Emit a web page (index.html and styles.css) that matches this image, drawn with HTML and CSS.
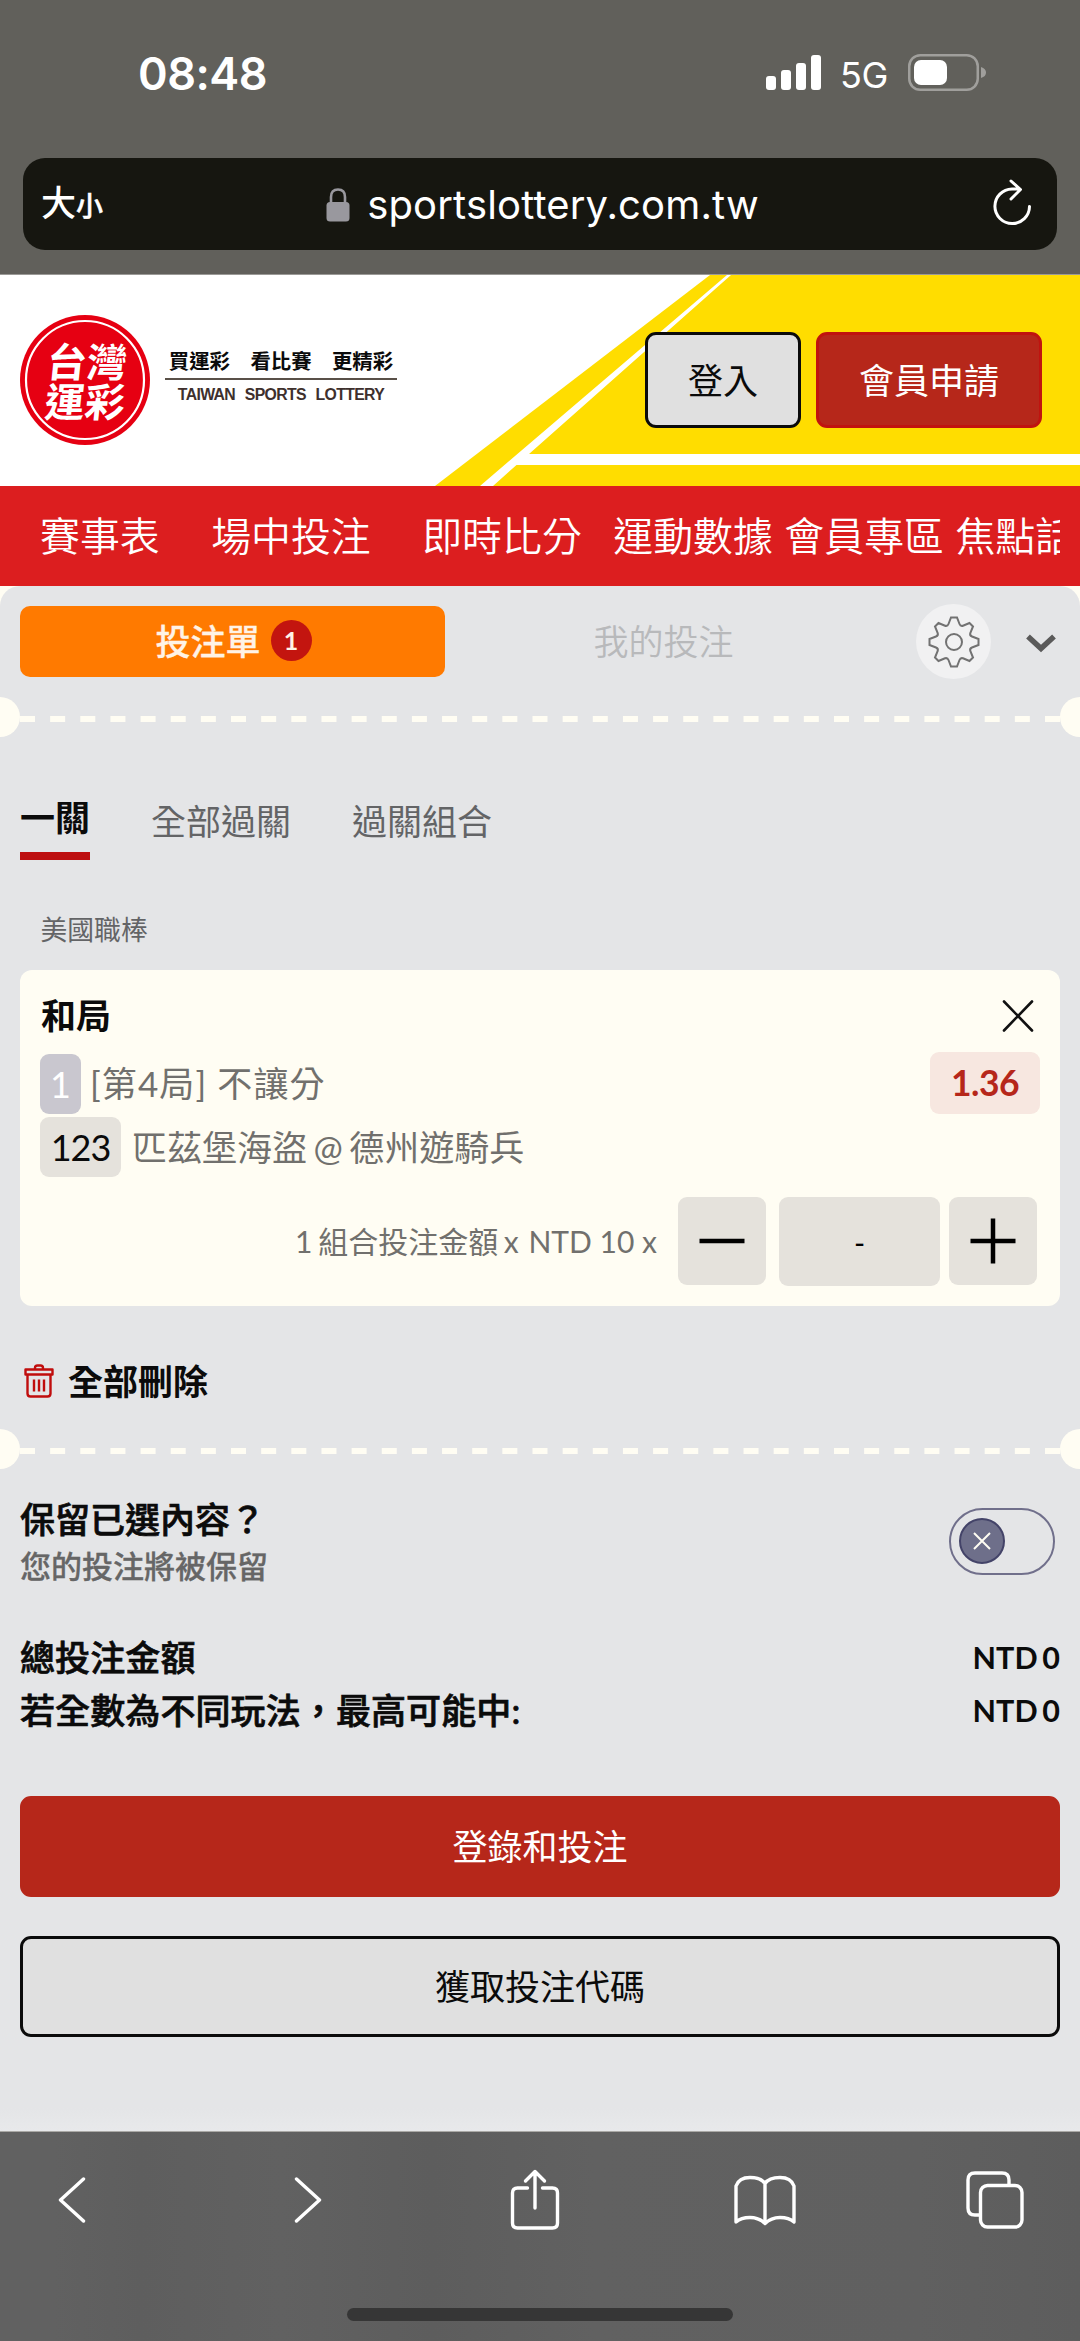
FILE: index.html
```html
<!DOCTYPE html>
<html lang="zh-Hant">
<head>
<meta charset="utf-8">
<title>台灣運彩</title>
<link rel="stylesheet" href="styles.css">
</head>
<body>
<div class="browser-top">
  <div class="status">
    <span class="clock">08:48</span>
    <div class="status-right">
      <svg class="signal" width="55" height="36" viewBox="0 0 55 36" fill="#fff"><rect x="0" y="21" width="10" height="14" rx="3"/><rect x="15" y="15" width="10" height="20" rx="3"/><rect x="30" y="8" width="10" height="27" rx="3"/><rect x="45" y="0" width="10" height="35" rx="3"/></svg>
      <span class="net">5G</span>
      <svg class="battery" width="80" height="38" viewBox="0 0 80 38"><rect x="1.25" y="1.25" width="68.5" height="34.5" rx="11" fill="none" stroke="#a09f9c" stroke-width="2.5"/><rect x="6" y="6" width="33" height="25" rx="7" fill="#fff"/><path d="M73 13q5 1.500 5 5.500t-5 5.500z" fill="#a09f9c"/></svg>
    </div>
  </div>
  <div class="urlbar">
    <span class="textsize"><b class="ts-big">大</b><b class="ts-small">小</b></span>
    <span class="url">
      <svg width="24" height="34" viewBox="0 0 24 34"><rect x="0.500" y="14" width="23" height="19.500" rx="3.500" fill="#99989e"/><path d="M5 15V9q0-7.500 7-7.500T19 9v6" fill="none" stroke="#99989e" stroke-width="2.600"/></svg>
      <span>sportslottery.com.tw</span>
    </span>
    <svg class="reload" width="42" height="48" viewBox="0 0 42 48" fill="none" stroke="#fff" stroke-width="3" stroke-linecap="round" stroke-linejoin="round"><path d="M38.500 27.500A17.300 17.300 0 1 1 21 10h8M20 2l9.500 8.500L20 20"/></svg>
  </div>
</div>
<header class="site-header">
  <svg class="header-art" width="1080" height="211" viewBox="0 0 1080 211"><path d="M710 0H1080V211H435z" fill="#fd0"/><path d="M727 0h4L529 179H1080v11H516.500L493 211H480z" fill="#fff"/></svg>
  <svg class="logo" width="130" height="130" viewBox="0 0 130 130"><circle cx="65" cy="65" r="65" fill="#e60012"/><circle cx="65" cy="65" r="59" fill="none" stroke="#fff" stroke-width="2.200"/><g class="logo-text" fill="#fff"><text transform="translate(25.500 62) skewX(-6)">台灣</text><text transform="translate(23.500 101.500) skewX(-6)">運彩</text></g></svg>
  <div class="slogan"><div class="slogan-zh">買運彩　看比賽　更精彩</div><div class="slogan-en">TAIWAN SPORTS LOTTERY</div></div>
  <div class="header-actions"><button class="btn btn-plain login">登入</button><button class="btn btn-red signup">會員申請</button></div>
</header>
<nav class="nav"><div class="nav-list"><a class="wide">賽事表</a><a class="wide">場中投注</a><a class="mid">即時比分</a><a>運動數據</a><a>會員專區</a><a>焦點話題</a></div></nav>
<main class="slip-bg">
 <div class="slip">
  <div class="slip-tabs">
    <div class="tab-active"><span>投注單</span><span class="count">1</span></div>
    <div class="tab-mine">我的投注</div>
    <div class="gear"><svg width="52" height="52" viewBox="-26 -26 52 52" fill="none" stroke="#727272" stroke-width="2"><path d="M-3-24.500H3L5.500-18Q6.500-15.500 9-16.300L15.500-19 19-15.500 16.300-9Q15.500-6.500 18-5.500L24.500-3V3L18 5.500Q15.500 6.500 16.300 9L19 15.500 15.500 19 9 16.300Q6.500 15.500 5.500 18L3 24.500H-3L-5.500 18Q-6.500 15.500-9 16.300L-15.500 19-19 15.500-16.300 9Q-15.500 6.500-18 5.500L-24.500 3V-3L-18-5.500Q-15.500-6.500-16.300-9L-19-15.500-15.500-19-9-16.300Q-6.500-15.500-5.500-18z"/><circle r="8"/></svg></div>
    <svg class="chev" width="32" height="20" viewBox="0 0 32 20"><path d="M3 3.500 16 15.500 29 3.500" fill="none" stroke="#5a5a5a" stroke-width="5.500"/></svg>
  </div>
  <div class="perf"><i></i><svg width="1040" height="6"><line x1="0" y1="3" x2="1040" y2="3" stroke="#fffdf3" stroke-width="6" stroke-dasharray="15 15.147"/></svg><i></i></div>
  <div class="modes"><div class="mode on">一關</div><div class="mode">全部過關</div><div class="mode">過關組合</div></div>
  <div class="league">美國職棒</div>
  <section class="card">
    <div class="row head"><span>和局</span><svg width="32" height="32" viewBox="0 0 32 32"><path d="M2 1.500 30 30.500M30 1.500 2 30.500" stroke="#111" stroke-width="2.600" stroke-linecap="round"/></svg></div>
    <div class="row market"><span class="chip chip-a">1</span><span class="txt">[第4局] 不讓分</span><span class="odds">1.36</span></div>
    <div class="row match"><span class="chip chip-b">123</span><span class="txt">匹茲堡海盜 @ 德州遊騎兵</span></div>
    <div class="row stake"><span class="stake-label">1 組合投注金額 x <span class="unit">NTD 10 x</span></span>
      <span class="sq"><svg width="46" height="46"><path d="M.5 23H45.500" stroke="#000" stroke-width="4.500"/></svg></span>
      <span class="field">-</span>
      <span class="sq"><svg width="46" height="46"><path d="M.5 23H45.500M23 .5V45.500" stroke="#000" stroke-width="4.500"/></svg></span></div>
  </section>
  <div class="clear"><svg width="30" height="34" viewBox="0 0 30 34" fill="none" stroke="#c00d0d" stroke-width="2.400" stroke-linejoin="round"><path d="M1.500 5.500H28.500V10.500H1.500zM11 5.500V4Q11 1.500 13.500 1.500h3Q19 1.500 19 4V5.500M3.500 10.500V29.500Q3.500 32.500 6.500 32.500h17Q26.500 32.500 26.500 29.500V10.500M10 15.500v12M15 15.500v12M20 15.500v12"/></svg><span>全部刪除</span></div>
  <div class="perf"><i></i><svg width="1040" height="6"><line x1="0" y1="3" x2="1040" y2="3" stroke="#fffdf3" stroke-width="6" stroke-dasharray="15 15.147"/></svg><i></i></div>
  <div class="keep"><div><div class="keep-title">保留已選內容？</div><div class="keep-sub">您的投注將被保留</div></div>
    <div class="toggle"><span class="knob"><svg width="18" height="18"><path d="M1 1 17 17M17 1 1 17" stroke="#fffdf3" stroke-width="2"/></svg></span></div></div>
  <div class="total"><span>總投注金額</span><span class="sum">NTD 0</span></div>
  <div class="total"><span>若全數為不同玩法，最高可能中:</span><span class="sum">NTD 0</span></div>
  <button class="btn btn-red big first">登錄和投注</button>
  <button class="btn btn-plain big">獲取投注代碼</button>
 </div>
</main>
<footer class="toolbar">
  <div class="tools">
    <svg class="back" width="28" height="46" viewBox="0 0 28 46"><path d="M25.500 2 2.500 23 25.500 44"/></svg>
    <svg class="forward" width="28" height="46" viewBox="0 0 28 46"><path d="M2.500 2 25.500 23 2.500 44"/></svg>
    <svg class="share" width="50" height="62" viewBox="0 0 50 62"><path d="M17.500 19H7.500Q2.500 19 2.500 24V54Q2.500 59 7.500 59H42.500Q47.500 59 47.500 54V24Q47.500 19 42.500 19H32.500M25 39V3M15.500 12 25 2.500 34.500 12"/></svg>
    <svg class="books" width="62" height="52" viewBox="0 0 62 52"><path d="M31 9.500Q27 3.500 16 3.500T2 12V48Q7 43.500 16 43.500T31 49.500Q37 43.500 46 43.500T60 48V12Q57 3.500 46 3.500T31 9.500V49"/></svg>
    <svg width="58" height="58" viewBox="0 0 58 58"><path d="M14 44H9Q2 44 2 37V9Q2 2 9 2H36Q43 2 43 9V14"/><rect x="14.500" y="14.500" width="41.500" height="41.500" rx="7"/></svg>
  </div>
  <div class="home"></div>
</footer>
</body>
</html>
```
FILE: styles.css
```css
*{box-sizing:border-box}
body{margin:0;width:1080px;height:2341px;overflow:hidden;font-family:Lato,"Noto Sans CJK TC",sans-serif;font-size:35px;line-height:36px;color:#0b0b0b;display:flex;flex-direction:column;font-weight:400}
svg{display:block;flex:none}
.browser-top{height:275px;background:#61605b;border-bottom:1px solid #9b9a97;padding:0 23px;font-family:Inter,"Noto Sans CJK TC",sans-serif;color:#fff;flex:none}
.status{height:158px;display:flex;justify-content:space-between;padding:54px 69px 0 115px}
.clock{font-size:45px;font-weight:600;line-height:40px;letter-spacing:-.5px}
.status-right{display:flex;align-items:flex-start;color:#fff}
.signal{margin-top:1px}
.net{font-size:36px;line-height:42px;width:47px;margin:0 20px;letter-spacing:-.5px;position:relative;left:-1px}
.urlbar{height:92px;border-radius:22px;background:#161610;display:flex;align-items:center;justify-content:space-between;padding:0 24px 0 18px}
.textsize{width:103px;display:flex;align-items:baseline;line-height:50px;padding-top:2px}
.ts-big{font-size:35px;font-weight:500}
.ts-small{font-size:27px;font-weight:500;-webkit-text-stroke:.5px}
.url{display:flex;align-items:center;gap:17px;font-size:40px;line-height:50px;padding-top:1px;letter-spacing:.15px}
.reload{margin-left:50px;margin-top:-2px}
.site-header{height:211px;background:#fff;position:relative;display:flex;align-items:flex-start;flex:none}
.header-art{position:absolute;left:0;top:0}
.logo{margin:40px 15px 0 20px;position:relative}
.logo-text{font:700 40px "Noto Sans CJK TC",sans-serif}
.slogan{position:relative;width:232px;margin-top:73px;text-align:center}
.slogan-zh{font:700 20.4px/25px "Noto Sans CJK TC",sans-serif;height:32px;border-bottom:2px solid #595048;white-space:nowrap}
.slogan-en{font:700 15.8px/20px "Liberation Sans",sans-serif;color:#3e302d;margin-top:5px;word-spacing:6px;white-space:nowrap;letter-spacing:-.65px}
.header-actions{position:relative;margin:57px 38px 0 auto;display:flex;gap:15px}
.btn{font:inherit;border-radius:11px;border:3px solid;padding:0 0 1px;text-align:center}
.btn-plain{background:#e0e0e0;border-color:#0b0b0b;color:#0b0b0b}
.btn-red{background:#b6271a;border-color:#c0130f;color:#fff}
.login{width:156px;height:96px}
.signup{width:226px;height:96px}
.nav{height:100px;background:#dc1e1f;padding:0 20px;flex:none}
.nav-list{overflow:hidden;height:100px;display:flex;white-space:nowrap;padding-left:20px;color:#fff;font-size:39.9px;line-height:99px;font-weight:350}
.nav a{margin-right:11.500px;flex:none}
.nav .wide{margin-right:51.500px}
.nav .mid{margin-right:31.500px}
.slip-bg{background:#fffdf3;height:1545px;flex:none}
.slip{height:1545px;border-radius:20px 20px 0 0;background:linear-gradient(#e4e5e7 1522px,#e8e9eb 1545px);display:flex;flex-direction:column;align-items:stretch}
.slip-tabs{display:flex;align-items:center;height:75px;margin-top:18px;padding:0 23px 0 20px;flex:none}
.tab-active{width:425px;height:71px;border-radius:10px;background:#ff7a00;color:#fff3e6;display:flex;align-items:center;justify-content:center;gap:10px;font-weight:500;padding:0 0 2px 2px}
.tab-active span:first-child{-webkit-text-stroke:.3px}
.count{width:41px;height:41px;border-radius:50%;background:#c3150f;font-size:25px;font-weight:700;line-height:40px;text-align:center}
.tab-mine{width:437px;text-align:center;color:#b8b9bb;font-weight:350;padding-bottom:2px}
.gear{width:75px;height:75px;border-radius:50%;background:#f1f1f2;display:flex;align-items:center;justify-content:center;margin-left:34px}
.chev{margin-left:34px;margin-top:2px}
.perf{height:40px;display:flex;align-items:center;overflow:hidden;flex:none;margin-top:18px}
.perf svg{margin-top:4px}
.perf i{width:20px;height:40px;background:#fffdf3;border-radius:0 20px 20px 0}
.perf i:last-child{border-radius:20px 0 0 20px}
.modes{display:flex;gap:61px;margin:63px 20px 0;height:60px;flex:none}
.mode{color:#636466;line-height:42px;font-size:35px}
.mode.on{font-weight:700;color:#0b0b0b;border-bottom:8px solid #bd0f10;line-height:34px}
.league{font-size:26.8px;line-height:31px;height:30px;color:#636466;margin:55px 0 0 40.500px}
.card{margin:25px 20px 0;height:336px;border-radius:12px;background:#fffdf3;padding:29px 20px 0;flex:none}
.row{display:flex;align-items:center}
.head{height:34px;font-weight:700;justify-content:space-between;padding:0 6px 0 1px}
.head span{padding-bottom:2px}
.market{height:63px;margin-top:18px;color:#71706d}
.market .txt{letter-spacing:1.1px}
.chip{height:60px;border-radius:9px;line-height:60px;text-align:center;font-size:36px}
.chip-a{width:41px;background:#c9c7cf;color:#fff;margin-right:9px;margin-top:3px}
.chip-b{width:81px;background:#e5e2dc;color:#0b0b0b;margin-right:11px;letter-spacing:-1px}
.odds{margin-left:auto;width:110px;height:62px;border-radius:9px;background:#f7e7e0;color:#b6271a;font-weight:700;font-size:35.500px;line-height:61px;text-align:center;letter-spacing:-.5px}
.match{height:60px;margin-top:3px;color:#71706d}
.match .txt{word-spacing:-2.500px}
.stake{margin-top:20px;height:89px;justify-content:flex-end;padding-right:3px;font-size:30px;color:#71706d;align-items:flex-start;line-height:89px}
.stake-label{margin-right:21px;word-spacing:-2px}
.unit{word-spacing:0;margin-left:4px}
.sq{width:88px;height:88px;border-radius:9px;background:#e5e2dc;display:flex;align-items:center;justify-content:center}
.field{width:161px;height:89px;border-radius:9px;background:#e5e2dc;color:#000;margin:0 9px 0 13px;text-align:center;line-height:91px}
.clear{display:flex;align-items:center;height:36px;margin:57px 0 0 24px;gap:14px;font-weight:700}
.clear + .perf{margin-top:30px}
.keep{display:flex;justify-content:space-between;margin:32px 25px 0 20px;height:86px}
.keep-title{font-weight:500;line-height:36px;-webkit-text-stroke:.7px}
.keep-sub{font-size:31px;color:#666;font-weight:500;line-height:34px;margin-top:12px;-webkit-text-stroke:.3px}
.toggle{width:106px;height:67px;border:2px solid #706f8b;border-radius:34px;margin-top:7px;padding:8px}
.knob{width:46px;height:46px;border-radius:50%;border:2px solid #434368;background:#6e6f8a;display:flex;align-items:center;justify-content:center}
.total{display:flex;justify-content:space-between;font-weight:500;height:53px;line-height:53px;margin:0 20px;-webkit-text-stroke:.7px;letter-spacing:.1px}
.keep + .total{margin-top:44px}
.sum{font-size:30.500px;font-weight:700;word-spacing:-3px;line-height:52px;-webkit-text-stroke:0}
.big{height:101px;width:1040px;margin:39px 20px 0;padding-bottom:2px;flex:none}
.big.first{margin-top:59px;border-color:#b6271a}
.toolbar{height:210px;background:linear-gradient(90deg,#616161 5%,#5e5e5e 13%,#616161 26%,#5d5d5d 40%,#616161 55%,#606060 85%,#5d5d5d);border-top:1px solid #aaa9a6;flex:none}
.tools{display:flex;align-items:center;height:136px;padding:0 0 0 58px}
.tools svg{fill:none;stroke:#fff;stroke-width:3.400;stroke-linecap:round;stroke-linejoin:round}
.back{margin-right:208px}
.forward{margin-right:188px}
.share{margin-right:174px}
.books{margin-right:170px}
.home{width:386px;height:13px;border-radius:7px;background:#363636;margin:40px auto 0}
```
